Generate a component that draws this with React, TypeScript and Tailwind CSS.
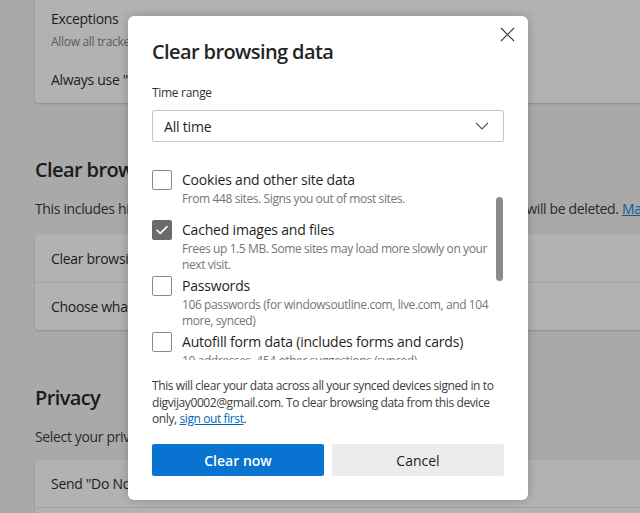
import React from "react";

function Checkbox({ checked }: { checked?: boolean }) {
  if (checked) {
    return (
      <div className="flex h-5 w-5 shrink-0 items-center justify-center rounded-[2px] bg-[#6b6b6b]">
        <svg width="12" height="10" viewBox="0 0 12 10" fill="none">
          <path d="M1 5.2 L4.3 8.4 L11 1.6" stroke="white" strokeWidth="1.6" strokeLinecap="round" strokeLinejoin="round" />
        </svg>
      </div>
    );
  }
  return <div className="h-5 w-5 shrink-0 rounded-[2px] border border-[#8a8a8a] bg-white" />;
}

function Item({ label, lines, checked }: { label: string; lines: string[]; checked?: boolean }) {
  return (
    <div className="flex min-h-[50px] gap-[10px] pb-[3px]">
      <Checkbox checked={checked} />
      <div className="flex flex-col">
        <div className="whitespace-nowrap text-[14px] leading-5 tracking-[-0.2px] text-[#1f1f1f]">{label}</div>
        <div className="mt-[1px] text-[12px] leading-4 tracking-[-0.4px] text-[#767676]">
          {lines.map((l, i) => (
            <div key={i} className="whitespace-nowrap">
              {l}
            </div>
          ))}
        </div>
      </div>
    </div>
  );
}

export default function App() {
  return (
    <div className="relative h-[513px] w-[640px] overflow-hidden bg-[#a9a9a9] font-['Open_Sans',sans-serif]">
      {/* Background settings page */}
      <div className="w-[760px] pl-[35px]">
        <div className="rounded-b-[4px] bg-[#b2b2b2] shadow-[0_1px_2px_rgba(0,0,0,0.18)]">
          <div className="px-4 pb-[5px] pt-[9px]">
            <div className="text-[14px] leading-5 tracking-[-0.3px] text-[#1c1c1c]">Exceptions</div>
            <div className="mt-[5px] text-[12px] leading-4 tracking-[-0.3px] text-[#5c5c5c]">
              Allow all trackers on sites you choose
            </div>
          </div>
          <div className="flex h-12 items-center px-4 text-[14px] tracking-[-0.3px] text-[#1c1c1c]">
            Always use "Strict" tracking prevention when browsing InPrivate
          </div>
        </div>

        <div className="mt-[53px] text-[20px] font-semibold leading-7 tracking-[-0.6px] text-[#1a1a1a]">
          Clear browsing data
        </div>
        <div className="mt-[15px] whitespace-nowrap text-[14px] leading-5 tracking-[-0.35px] text-[#2a2a2a]">
          This includes history, passwords, cookies, and more. Only data from this profile will be deleted.{" "}
          <span className="text-[#0f5a99] underline">Manage your data</span>
        </div>
        <div className="mt-[15px] rounded-[4px] bg-[#b2b2b2] shadow-[0_1px_2px_rgba(0,0,0,0.18)]">
          <div className="flex h-12 items-center px-4 text-[14px] tracking-[-0.3px] text-[#1c1c1c]">
            Clear browsing data now
          </div>
          <div className="flex h-12 items-center border-t border-[#a2a2a2] px-4 text-[14px] tracking-[-0.3px] text-[#1c1c1c]">
            Choose what to clear every time you close the browser
          </div>
        </div>

        <div className="mt-[54px] text-[20px] font-semibold leading-7 tracking-[-0.6px] text-[#1a1a1a]">Privacy</div>
        <div className="mt-[15px] whitespace-nowrap text-[14px] leading-5 tracking-[-0.35px] text-[#2a2a2a]">
          Select your privacy settings for Microsoft Edge.
        </div>
        <div className="mt-[13px] rounded-[4px] bg-[#b2b2b2] shadow-[0_1px_2px_rgba(0,0,0,0.18)]">
          <div className="flex h-12 items-center border-b border-[#a2a2a2] px-4 text-[14px] tracking-[-0.3px] text-[#1c1c1c]">
            Send "Do Not Track" requests
          </div>
          <div className="h-12" />
        </div>
      </div>

      {/* Dialog */}
      <div className="absolute left-[128px] top-[16px] flex w-[400px] flex-col rounded-[6px] bg-white px-6 pb-6 pt-[22px] shadow-[0_0_10px_rgba(0,0,0,0.22)]">
        <button className="absolute right-[13px] top-[11px] flex h-[15px] w-[15px] items-center justify-center">
          <svg width="15" height="15" viewBox="0 0 15 15" fill="none">
            <path d="M1 1 L14 14 M14 1 L1 14" stroke="#3a3a3a" strokeWidth="1.1" />
          </svg>
        </button>
        <div className="text-[20px] font-semibold leading-7 tracking-[-0.6px] text-[#242424]">Clear browsing data</div>
        <div className="mt-[19px] text-[12px] leading-4 tracking-[-0.3px] text-[#333333]">Time range</div>
        <div className="mt-[9px] flex h-8 items-center justify-between rounded-[2px] border border-[#c6c6c6] pl-[11px] pr-[14px]">
          <span className="text-[14px] tracking-[-0.2px] text-[#242424]">All time</span>
          <svg width="14" height="8" viewBox="0 0 14 8" fill="none">
            <path d="M1 1 L7 7 L13 1" stroke="#555555" strokeWidth="1.1" />
          </svg>
        </div>

        <div className="relative mt-4 h-[202px] overflow-hidden pt-3">
          <Item label="Cookies and other site data" lines={["From 448 sites. Signs you out of most sites."]} />
          <Item
            checked
            label="Cached images and files"
            lines={["Frees up 1.5 MB. Some sites may load more slowly on your", "next visit."]}
          />
          <Item
            label="Passwords"
            lines={["106 passwords (for windowsoutline.com, live.com, and 104", "more, synced)"]}
          />
          <Item
            label="Autofill form data (includes forms and cards)"
            lines={["10 addresses, 454 other suggestions (synced)"]}
          />
          <div className="absolute right-[1px] top-[39px] h-[84px] w-[7px] rounded-full bg-[#8b8b8b]" />
        </div>

        <p className="mt-[18px] text-[12px] leading-[16.5px] tracking-[-0.4px] text-[#3d3d3d]">
          <span className="block whitespace-nowrap">
            This will clear your data across all your synced devices signed in to
          </span>
          <span className="block whitespace-nowrap">
            digvijay0002@gmail.com. To clear browsing data from this device
          </span>
          <span className="block whitespace-nowrap">
            only, <span className="text-[#0067b8] underline">sign out first</span>.
          </span>
        </p>

        <div className="mt-[16.5px] grid h-8 grid-cols-2 gap-2">
          <button className="rounded-[2px] bg-[#0873d0] text-[14px] font-semibold text-white">Clear now</button>
          <button className="rounded-[2px] bg-[#ececec] text-[14px] text-[#1f1f1f]">Cancel</button>
        </div>
      </div>
    </div>
  );
}
